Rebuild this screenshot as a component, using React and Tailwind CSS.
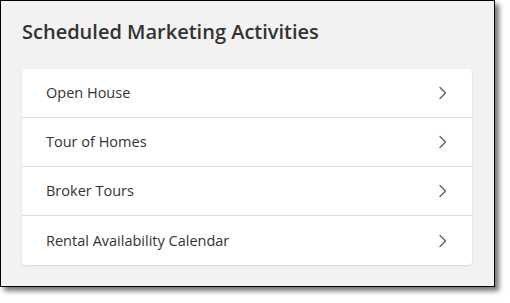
import React from "react";

const items = ["Open House", "Tour of Homes", "Broker Tours", "Rental Availability Calendar"];

function Chevron() {
  return (
    <svg width="10" height="14" viewBox="0 0 10 14" fill="none">
      <path d="M2 1.5 L7.5 7 L2 12.5" stroke="#5f6368" strokeWidth="1.4" strokeLinecap="round" strokeLinejoin="round" />
    </svg>
  );
}

export default function App() {
  return (
    <div className="w-[510px] h-[303px] bg-white" style={{ fontFamily: '"Open Sans", sans-serif' }}>
      <div className="w-[495px] h-[287px] border border-black bg-[#f2f2f2] shadow-[4px_4px_5px_rgba(0,0,0,0.55)] pt-[17px] pl-[21px] pr-[22px]">
        <h1 className="text-[20px] leading-[28px] font-semibold text-[#333333]">Scheduled Marketing Activities</h1>
        <div className="mt-[23px] bg-white rounded-[4px] shadow-[0_1px_2px_rgba(0,0,0,0.12)]">
          {items.map((t, i) => (
            <div
              key={t}
              className={`h-[49px] flex items-center justify-between pl-[24px] pr-[24px] ${i < items.length - 1 ? "border-b border-[#dddddd]" : ""}`}
            >
              <span className="text-[14.5px] font-medium text-[#333333]">{t}</span>
              <Chevron />
            </div>
          ))}
        </div>
      </div>
    </div>
  );
}
